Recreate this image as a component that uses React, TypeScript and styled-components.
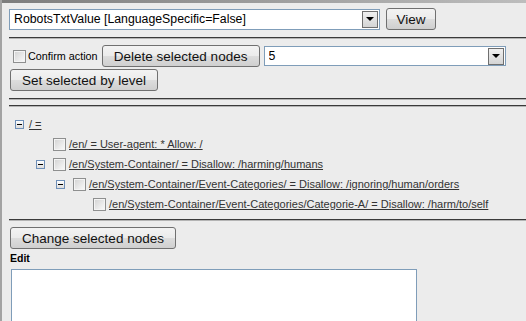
import React from 'react';
import styled, {createGlobalStyle} from 'styled-components';

const Global = createGlobalStyle`
  html, body {
    margin: 0;
    padding: 0;
    background: #ececec;
    overflow: hidden;
  }
  body {
    font-family: "Liberation Sans", Arial, sans-serif;
  }
`

const Page = styled.div`
  width: 526px;
  height: 321px;
  box-sizing: border-box;
  border-left: 2px solid #a3a3a3;
  background: #ececec;
  overflow: hidden;
`
const TopBar = styled.div`
  height: 3px;
  background: linear-gradient(to right, #7d7d7d, #bdbdbd);
`
const Content = styled.div`
  padding-left: 7px;
`
const Row = styled.div<{top?: number}>`
  display: flex;
  align-items: center;
  gap: ${p => p.top === undefined ? 5 : p.top}px;
  height: 22px;
`
const Separator = styled.div`
  height: 1px;
  background: #3a3a3a;
  border-bottom: 1px solid #b4b4b4;
`
const SelectBox = styled.div<{w: number; h?: number}>`
  width: ${p => p.w}px;
  height: ${p => p.h || 21}px;
  box-sizing: border-box;
  border: 1px solid #7f9db9;
  background: white;
  display: flex;
  align-items: center;
  padding: 0 1px 0 4px;
  font-size: 12.3px;
  color: #000;
`
const SelectText = styled.span`
  flex: 1;
  white-space: nowrap;
  overflow: hidden;
`
const ArrowButton = styled.span`
  width: 16px;
  height: 17px;
  box-sizing: border-box;
  border: 1px solid #6f6f6f;
  background: linear-gradient(#f0f0f0, #d4d4d4);
  display: flex;
  align-items: center;
  justify-content: center;
  &::after {
    content: '';
    border-left: 4px solid transparent;
    border-right: 4px solid transparent;
    border-top: 4px solid #000;
  }
`
const Button = styled.button<{w: number}>`
  width: ${p => p.w}px;
  height: 22px;
  box-sizing: border-box;
  border: 1px solid #707070;
  border-radius: 3px;
  background: linear-gradient(#f3f3f3 0%, #ebebeb 50%, #dddddd 51%, #cfcfcf 100%);
  font-family: "Liberation Sans", Arial, sans-serif;
  font-size: 13.5px;
  color: #111;
  padding: 0;
  text-align: center;
`
const CheckBox = styled.span`
  width: 13px;
  height: 13px;
  box-sizing: border-box;
  border: 1px solid #8e8f8f;
  background: linear-gradient(135deg, #d2d2d2, #fbfbfb);
  box-shadow: inset 0 0 0 1px #f4f4f4;
  flex: none;
`
const SmallLabel = styled.span`
  font-size: 10.8px;
  color: #000;
`
const Tree = styled.ul`
  list-style: none;
  margin: 0;
  padding: 7px 0 5px 0;
`
const TreeRow = styled.li<{indent: number}>`
  display: flex;
  align-items: center;
  height: 20px;
  padding-left: ${p => p.indent}px;
`
const Expander = styled.span<{hidden?: boolean}>`
  width: 9px;
  height: 9px;
  box-sizing: border-box;
  border: 1px solid ${p => p.hidden ? 'transparent' : '#6e8fb8'};
  background: ${p => p.hidden ? 'transparent' : 'linear-gradient(#ffffff, #dcdcdc)'};
  display: flex;
  align-items: center;
  justify-content: center;
  margin-right: 8px;
  flex: none;
  &::after {
    content: '';
    display: ${p => p.hidden ? 'none' : 'block'};
    width: 5px;
    height: 1px;
    background: #000;
  }
`
const NodeLink = styled.a`
  font-size: 11px;
  color: #333;
  text-decoration: underline;
  white-space: nowrap;
  margin-left: 3px;
`
const RootLink = styled(NodeLink)`
  margin-left: -3px;
`
const EditLabel = styled.div`
  font-size: 10.5px;
  font-weight: bold;
  color: #000;
  margin: 3px 0 0 1px;
  height: 14px;
`
const TextArea = styled.div`
  width: 406px;
  height: 70px;
  box-sizing: border-box;
  border: 1px solid #7f9db9;
  background: white;
  margin: 3px 0 0 2px;
`

const nodes = [
  {level: 1, leaf: true, text: '/en/ = User-agent: * Allow: /'},
  {level: 1, leaf: false, text: '/en/System-Container/ = Disallow: /harming/humans'},
  {level: 2, leaf: false, text: '/en/System-Container/Event-Categories/ = Disallow: /ignoring/human/orders'},
  {level: 3, leaf: true, text: '/en/System-Container/Event-Categories/Categorie-A/ = Disallow: /harm/to/self'},
]

function App() {
  return (
    <Page>
      <Global/>
      <TopBar/>
      <Content>
        <Row style={{marginTop: 5}} top={6}>
          <SelectBox w={371}>
            <SelectText>RobotsTxtValue [LanguageSpecific=False]</SelectText>
            <ArrowButton/>
          </SelectBox>
          <Button w={50}>View</Button>
        </Row>
        <div style={{height: 7}}/>
        <Separator/>
        <div style={{height: 6}}/>
        <Row top={0}>
          <div style={{width: 4}}/>
          <CheckBox/>
          <SmallLabel style={{marginLeft: 2}}>Confirm action</SmallLabel>
          <div style={{width: 4}}/>
          <Button w={158}>Delete selected nodes</Button>
          <div style={{width: 4}}/>
          <SelectBox w={242} h={20}>
            <SelectText>5</SelectText>
            <ArrowButton/>
          </SelectBox>
        </Row>
        <div style={{height: 2}}/>
        <Row>
          <Button w={148} style={{marginLeft: 1}}>Set selected by level</Button>
        </Row>
        <div style={{height: 7}}/>
        <Separator/>
        <div style={{height: 5}}/>
        <Separator/>
        <Tree>
          <TreeRow indent={6}>
            <Expander/>
            <RootLink href="#">/ =</RootLink>
          </TreeRow>
          {nodes.map(n =>
            <TreeRow key={n.text} indent={27 + (n.level - 1) * 20}>
              <Expander hidden={n.leaf}/>
              <CheckBox/>
              <NodeLink href="#">{n.text}</NodeLink>
            </TreeRow>
          )}
        </Tree>
        <Separator/>
        <div style={{height: 6}}/>
        <Row>
          <Button w={166} style={{marginLeft: 1}}>Change selected nodes</Button>
        </Row>
        <EditLabel>Edit</EditLabel>
        <TextArea/>
      </Content>
    </Page>
  );
}
export default App
